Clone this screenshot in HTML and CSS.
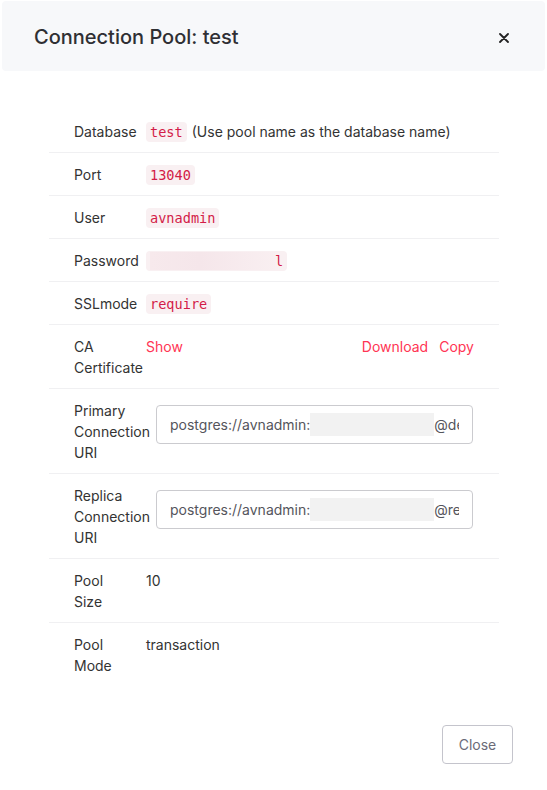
FILE: index.html
```html
<!DOCTYPE html>
<html>
<head>
<meta charset="utf-8">
<link rel="stylesheet" href="styles.css">
</head>
<body>
<div class="modal">
  <div class="modal-header">
    <h1 class="title">Connection Pool: test</h1>
    <button class="close-x" aria-label="Close">
      <svg width="10" height="10" viewBox="0 0 10 10"><path d="M1 1L9 9M9 1L1 9" stroke="#222" stroke-width="1.8" stroke-linecap="round"/></svg>
    </button>
  </div>
  <div class="modal-body">
    <div class="row">
      <div class="label">Database</div>
      <div class="value"><code class="code">test</code> (Use pool name as the database name)</div>
    </div>
    <div class="row">
      <div class="label">Port</div>
      <div class="value"><code class="code">13040</code></div>
    </div>
    <div class="row">
      <div class="label">User</div>
      <div class="value"><code class="code">avnadmin</code></div>
    </div>
    <div class="row">
      <div class="label">Password</div>
      <div class="value"><code class="code"><span class="pw-redact"></span>l</code></div>
    </div>
    <div class="row">
      <div class="label">SSLmode</div>
      <div class="value"><code class="code">require</code></div>
    </div>
    <div class="row">
      <div class="label">CA Certificate</div>
      <div class="value value-links">
        <a class="link">Show</a>
        <div class="link-group"><a class="link">Download</a><a class="link">Copy</a></div>
      </div>
    </div>
    <div class="row">
      <div class="label">Primary Connection URI</div>
      <div class="value">
        <div class="uri-input"><div class="uri-text">postgres://avnadmin:<span class="uri-redact"></span>@de</div></div>
      </div>
    </div>
    <div class="row">
      <div class="label">Replica Connection URI</div>
      <div class="value">
        <div class="uri-input"><div class="uri-text">postgres://avnadmin:<span class="uri-redact"></span>@re</div></div>
      </div>
    </div>
    <div class="row">
      <div class="label">Pool Size</div>
      <div class="value">10</div>
    </div>
    <div class="row last">
      <div class="label">Pool Mode</div>
      <div class="value">transaction</div>
    </div>
  </div>
  <div class="modal-footer">
    <button class="btn">Close</button>
  </div>
</div>
</body>
</html>
```

FILE: styles.css
```css
html, body {
  margin: 0;
  padding: 0;
  background: #ffffff;
}
body {
  font-family: Inter, "Noto Sans", "Liberation Sans", sans-serif;
  color: #333333;
  font-size: 14px;
}
.modal {
  margin: 1px 2px 0 2px;
  background: #fff;
}
.modal-header {
  height: 70px;
  background: #f7f8fa;
  border-radius: 4px;
  display: flex;
  align-items: center;
  padding: 0 32px 0 32px;
}
.title {
  margin: 0;
  font-size: 20px;
  font-weight: 500;
  color: #2f2f33;
  flex: 1;
  padding-top: 2px;
}
.close-x {
  border: none;
  background: none;
  padding: 0;
  margin: 4px 4px 0 0;
  width: 10px;
  height: 10px;
  display: flex;
  cursor: pointer;
}
.modal-body {
  padding: 39px 46px 0 47px;
}
.row {
  display: flex;
  align-items: flex-start;
  padding: 11px 25px 10px 25px;
  line-height: 21px;
  border-bottom: 1px solid #f0f0f2;
}
.row.last {
  border-bottom: none;
}
.label {
  flex: 0 0 auto;
  width: 60px;
  padding-right: 12px;
  color: #333;
}
.value {
  flex: 1;
  min-width: 0;
  color: #333;
  display: flex;
  align-items: center;
  min-height: 21px;
}
.code {
  font-family: "DejaVu Sans Mono", "Liberation Mono", monospace;
  font-size: 13.6px;
  color: #d31c48;
  background: #f9f0f2;
  border-radius: 4px;
  padding: 0 4px;
  line-height: 20px;
  height: 20px;
  margin-right: 5px;
  display: inline-flex;
  align-items: center;
}
.pw-redact {
  display: inline-block;
  width: 125px;
  height: 18px;
  background: linear-gradient(90deg, #f7e9ec, #f5e6ea 40%, #f9eff1);
}
.value-links {
  justify-content: space-between;
}
.link {
  color: #ff3554;
  cursor: pointer;
}
.link-group {
  display: flex;
  gap: 11px;
}
.uri-input {
  flex: 1;
  min-width: 0;
  margin: 5px 1px 0 10px;
  height: 39px;
  box-sizing: border-box;
  border: 1px solid #cbcbcf;
  border-radius: 4px;
  padding: 0 13px;
  display: flex;
  align-items: center;
}
.uri-text {
  flex: 1;
  min-width: 0;
  line-height: 23px;
  color: #55555c;
  white-space: nowrap;
  overflow: hidden;
  display: flex;
  align-items: center;
}
.uri-redact {
  display: inline-block;
  flex: 0 0 124px;
  width: 124px;
  height: 23px;
  background: #f2f2f2;
}
.modal-footer {
  display: flex;
  justify-content: flex-end;
  padding: 39px 32px 0 0;
}
.btn {
  width: 71px;
  height: 39px;
  background: #fff;
  border: 1px solid #c4c4cc;
  border-radius: 4px;
  font-family: Inter, "Noto Sans", "Liberation Sans", sans-serif;
  font-size: 14px;
  color: #6b6b78;
  cursor: pointer;
}
```
